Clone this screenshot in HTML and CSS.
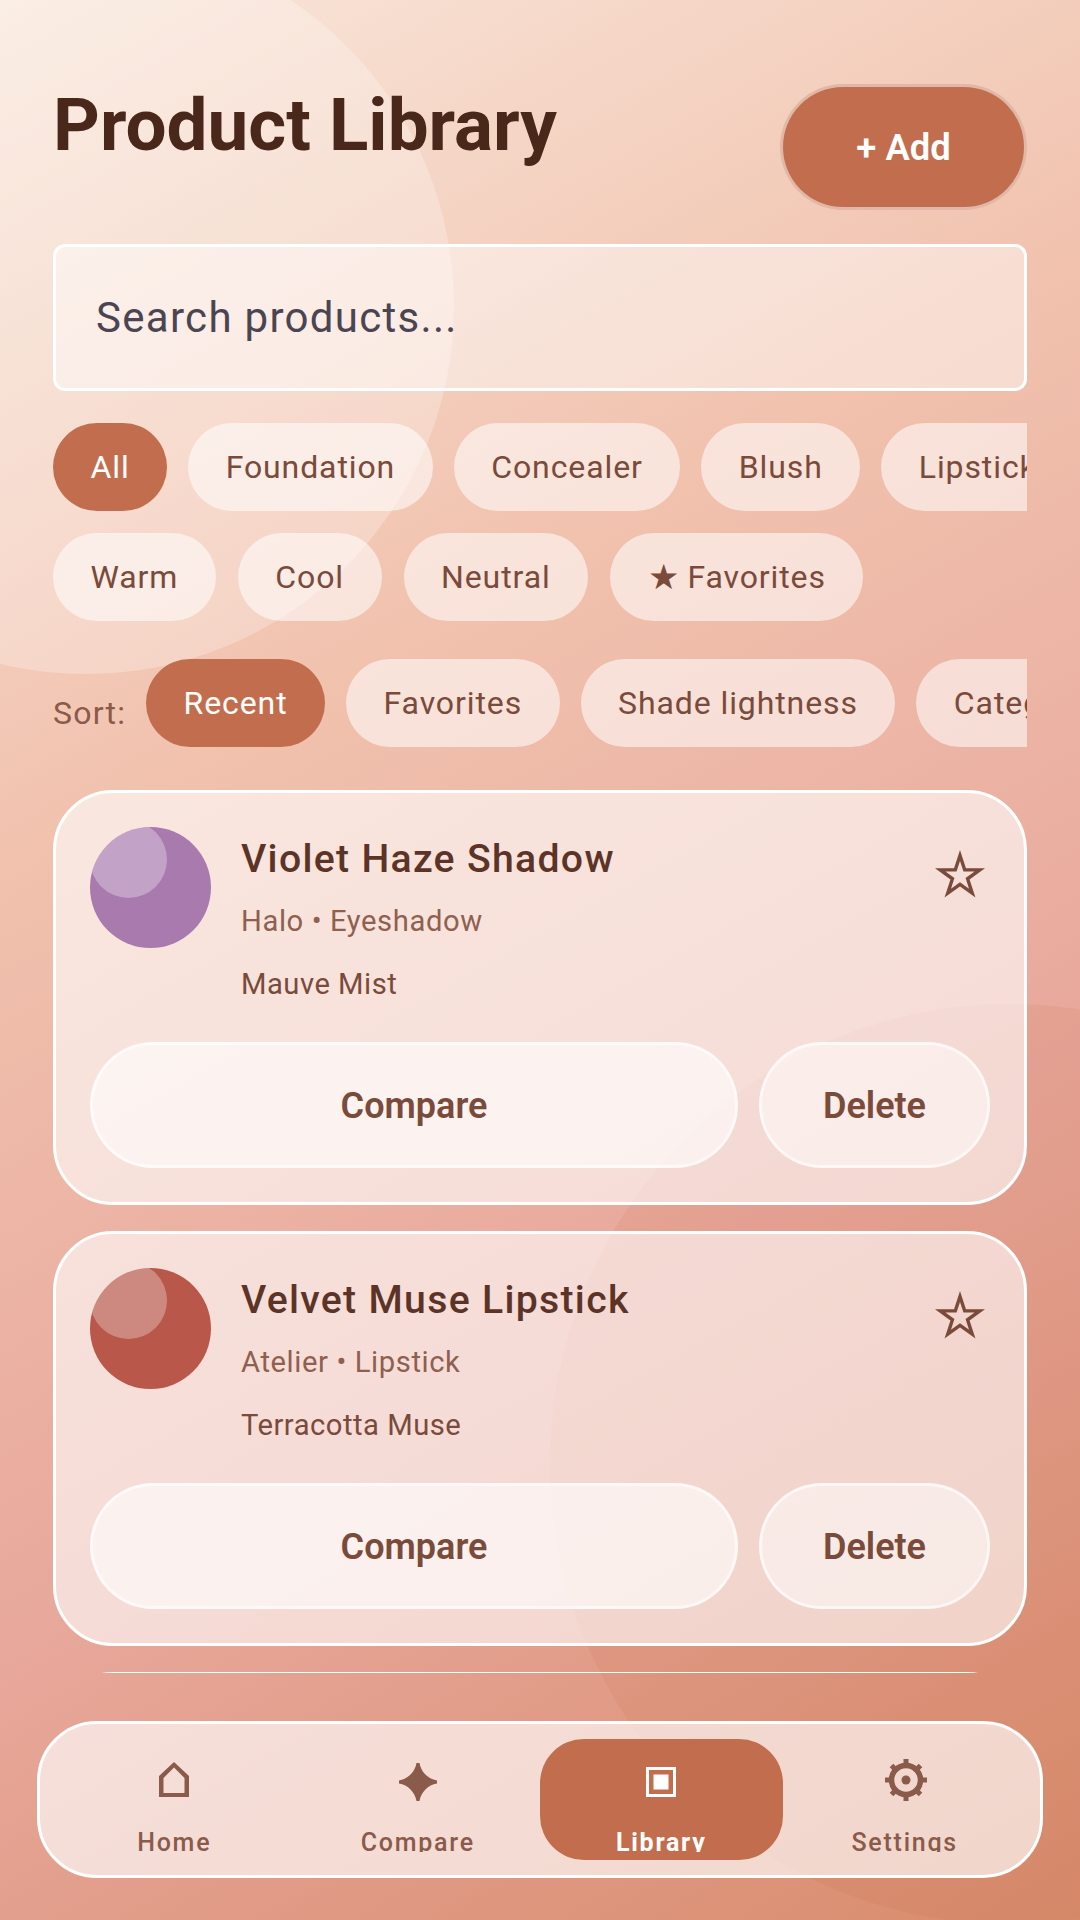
FILE: index.html

```html
<!DOCTYPE html>
<html>
<head>
  <title>Product Library</title>
  <meta name="viewport" content="width=device-width, initial-scale=1">

  <link rel="stylesheet" href="styles.css">
</head>
<body>
  <div class="screen">
    <div class="blob blob-top"></div>
    <div class="blob blob-bottom"></div>

    <header class="header">
      <h1>Product Library</h1>
      <button class="add-button">+ Add</button>
    </header>

    <div class="search">Search products...</div>

    <div class="chip-row first-row">
      <span class="chip active">All</span>
      <span class="chip">Foundation</span>
      <span class="chip">Concealer</span>
      <span class="chip">Blush</span>
      <span class="chip">Lipstick</span>
      <span class="chip">Eyeshadow</span>
    </div>
    <div class="chip-row second-row">
      <span class="chip">Warm</span>
      <span class="chip">Cool</span>
      <span class="chip">Neutral</span>
      <span class="chip"><span class="chip-star">★</span> Favorites</span>
    </div>
    <div class="chip-row sort-row">
      <span class="sort-label">Sort:</span>
      <span class="chip active">Recent</span>
      <span class="chip">Favorites</span>
      <span class="chip">Shade lightness</span>
      <span class="chip">Category</span>
    </div>

    <div class="product-list">
      <div class="card">
        <div class="card-top">
          <div class="swatch swatch-violet"><div class="swatch-shine"></div></div>
          <div class="card-text">
            <div class="card-title">Violet Haze Shadow</div>
            <div class="card-brand">Halo • Eyeshadow</div>
            <div class="card-shade">Mauve Mist</div>
          </div>
          <svg class="fav-star" width="50" height="48" viewBox="0 0 50 48">
            <path d="M25 5.5L29.67 19.87H44.78L32.56 28.76L37.23 43.13L25 34.25L12.77 43.13L17.44 28.76L5.22 19.87H20.33Z"/>
          </svg>
        </div>
        <div class="card-actions">
          <button class="card-button compare">Compare</button>
          <button class="card-button">Delete</button>
        </div>
      </div>

      <div class="card">
        <div class="card-top">
          <div class="swatch swatch-red"><div class="swatch-shine"></div></div>
          <div class="card-text">
            <div class="card-title">Velvet Muse Lipstick</div>
            <div class="card-brand">Atelier • Lipstick</div>
            <div class="card-shade">Terracotta Muse</div>
          </div>
          <svg class="fav-star" width="50" height="48" viewBox="0 0 50 48">
            <path d="M25 5.5L29.67 19.87H44.78L32.56 28.76L37.23 43.13L25 34.25L12.77 43.13L17.44 28.76L5.22 19.87H20.33Z"/>
          </svg>
        </div>
        <div class="card-actions">
          <button class="card-button compare">Compare</button>
          <button class="card-button">Delete</button>
        </div>
      </div>

      <!-- next card is only just scrolled into view -->
      <div class="card"></div>
    </div>

    <nav class="bottom-nav">
      <div class="nav-item">
        <div class="nav-icon">
          <svg class="icon-home" width="30" height="35" viewBox="0 0 30 35">
            <path fill-rule="evenodd" d="M15 0L30 14V35H0V14ZM15 5.5L4.500 16V31H25.500V16Z"/>
          </svg>
        </div>
        <span class="nav-label">Home</span>
      </div>
      <div class="nav-item">
        <div class="nav-icon">
          <svg class="icon-compare" width="38" height="38" viewBox="0 0 38 38">
            <path d="M17.500 0H20.500C22 9 29 16 38 17.500V20.500C29 22 22 29 20.500 38H17.500C16 29 9 22 0 20.500V17.500C9 16 16 9 17.500 0Z"/>
          </svg>
        </div>
        <span class="nav-label">Compare</span>
      </div>
      <div class="nav-item active">
        <div class="nav-icon">
          <svg class="icon-library" width="30" height="30" viewBox="0 0 30 30">
            <path fill-rule="evenodd" d="M0 0H30V30H0ZM3 3V27H27V3Z"/>
            <rect x="7.500" y="7.500" width="15" height="15"/>
          </svg>
        </div>
        <span class="nav-label">Library</span>
      </div>
      <div class="nav-item">
        <div class="nav-icon">
          <svg class="icon-settings" width="42" height="42" viewBox="0 0 42 42">
            <circle class="gear-ring" cx="21" cy="21" r="14.500"/>
            <path class="gear-teeth" d="M21 0V7M21 35V42M0 21H7M35 21H42M6.500 6.500L11 11M31 31L35.500 35.500M6.500 35.500L11 31M31 11L35.500 6.500"/>
            <circle cx="21" cy="21" r="4.500"/>
          </svg>
        </div>
        <span class="nav-label">Settings</span>
      </div>
    </nav>
  </div>
</body>
</html>
```

FILE: styles.css

```css
* {
  box-sizing: border-box;
}

body {
  margin: 0;
  font-family: Roboto, "Liberation Sans", sans-serif;
}

.screen {
  position: relative;
  width: 1080px;
  height: 1920px;
  overflow: hidden;
  display: flex;
  flex-direction: column;
  padding: 84px 53px 42px;
  background: linear-gradient(150.6deg, #f9e8dc 0%, #f1c2ae 34%, #e8a89c 65%, #d88c6c 100%);
}

.blob {
  position: absolute;
  border-radius: 50%;
}

.blob-top {
  left: -282px;
  top: -62px;
  width: 736px;
  height: 736px;
  background-color: rgba(255, 255, 255, 0.25);
}

.blob-bottom {
  left: 550px;
  top: 1004px;
  width: 920px;
  height: 920px;
  background-color: rgba(200, 110, 70, 0.12);
}

.header,
.search,
.chip-row,
.product-list,
.bottom-nav {
  position: relative;
}

.header {
  display: flex;
  justify-content: space-between;
  align-items: flex-start;
  flex-shrink: 0;
}

h1 {
  margin: 0;
  font-size: 72.800px;
  line-height: 82px;
  font-weight: 700;
  color: #4a271b;
}

.add-button {
  width: 247px;
  height: 126px;
  border: 3px solid rgba(255, 255, 255, 0.5);
  border-radius: 63px;
  background-color: #c26e4e;
  color: #fff;
  font-family: inherit;
  font-size: 36.400px;
  font-weight: 600;
}

.search {
  flex-shrink: 0;
  height: 147px;
  margin-top: 34px;
  padding: 0 40px;
  display: flex;
  align-items: center;
  border: 3px solid #fff;
  border-radius: 12px;
  background-color: rgba(255, 255, 255, 0.45);
  color: #4a4550;
  font-size: 42px;
  letter-spacing: 1.300px;
}

.chip-row {
  flex-shrink: 0;
  display: flex;
  gap: 21px;
  overflow: hidden;
}

.first-row {
  margin-top: 32px;
}

.second-row {
  margin-top: 22px;
  gap: 22px;
}

.sort-row {
  margin-top: 38px;
}

.chip {
  flex-shrink: 0;
  height: 88px;
  padding: 0 37.500px;
  display: flex;
  align-items: center;
  border-radius: 44px;
  background-color: rgba(255, 255, 255, 0.55);
  color: #7a4a3a;
  font-size: 32px;
  letter-spacing: 0.900px;
  white-space: pre;
}

.chip-star {
  margin-right: -1px;
  font-size: 35px;
}

.chip.active {
  background-color: #c26e4e;
  color: #fff;
}

.sort-label {
  flex-shrink: 0;
  margin-right: -1px;
  padding-top: 35px;
  color: #8a5a4a;
  font-size: 32px;
  letter-spacing: 1.200px;
}

.product-list {
  flex: 1;
  min-height: 0;
  margin-top: 43px;
  overflow: hidden;
  display: flex;
  flex-direction: column;
  gap: 26px;
}

.card {
  flex-shrink: 0;
  height: 415px;
  padding: 34px;
  border: 3px solid #fff;
  border-radius: 60px;
  background-color: rgba(255, 255, 255, 0.6);
}

.card-top {
  display: flex;
  height: 173px;
}

.swatch {
  position: relative;
  flex-shrink: 0;
  width: 121px;
  height: 121px;
  border-radius: 50%;
  overflow: hidden;
}

.swatch-violet {
  background-color: #a87aae;
}

.swatch-red {
  background-color: #b8574a;
}

.swatch-shine {
  position: absolute;
  left: 0;
  top: -6px;
  width: 77px;
  height: 77px;
  border-radius: 50%;
  background-color: rgba(255, 255, 255, 0.3);
}

.card-text {
  flex: 1;
  margin-left: 30px;
}

.card-title {
  margin-top: 9px;
  font-size: 39.200px;
  line-height: 46px;
  font-weight: 550;
  letter-spacing: 1.300px;
  color: #5c3427;
}

.card-brand {
  margin-top: 21px;
  font-size: 29.200px;
  line-height: 36px;
  letter-spacing: 0.600px;
  color: #8f5f4f;
}

.card-shade {
  margin-top: 27px;
  font-size: 29.200px;
  line-height: 36px;
  letter-spacing: 0.500px;
  color: #7a4a3a;
}

.fav-star {
  flex-shrink: 0;
  margin: 23px 5px 0 0;
  fill: none;
  stroke: #7a4a3a;
  stroke-width: 3.400;
  stroke-miterlimit: 10;
}

.card-actions {
  display: flex;
  gap: 21px;
  margin-top: 42px;
}

.card-button {
  width: 231px;
  height: 126px;
  padding: 2px 0 0;
  border: 3px solid rgba(255, 255, 255, 0.6);
  border-radius: 63px;
  background-color: rgba(255, 255, 255, 0.5);
  color: #7a4a3a;
  font-family: inherit;
  font-size: 36px;
  font-weight: 650;
}

.card-button.compare {
  flex: 1;
  background-color: rgba(255, 255, 255, 0.6);
}

.bottom-nav {
  flex-shrink: 0;
  height: 157px;
  margin: 48px -16px 0;
  padding: 15px 13.500px 15px 12.500px;
  display: flex;
  border: 3px solid #fff;
  border-radius: 60px;
  background-color: rgba(255, 255, 255, 0.65);
}

.nav-item {
  flex: 1;
  height: 121px;
  overflow: hidden;
  display: flex;
  flex-direction: column;
  align-items: center;
  border-radius: 44px;
  color: #8a5a4a;
}

.nav-item.active {
  background-color: #c26e4e;
  color: #fff;
}

.nav-icon {
  height: 90px;
}

.nav-icon svg {
  display: block;
  fill: currentColor;
}

.icon-home {
  margin-top: 23px;
}

.icon-compare {
  margin-top: 24px;
}

.icon-library {
  margin-top: 28px;
}

.icon-settings {
  margin: 20px 0 0 2px;
}

.gear-ring {
  fill: none;
  stroke: currentColor;
  stroke-width: 5.500;
}

.gear-teeth {
  fill: none;
  stroke: currentColor;
  stroke-width: 5;
}

/* label box is shorter than the text, descenders get cut off */
.nav-label {
  height: 23px;
  overflow: hidden;
  font-size: 25px;
  line-height: 28px;
  font-weight: 500;
  letter-spacing: 1.750px;
}

.nav-item.active .nav-label {
  font-weight: 700;
}
```
